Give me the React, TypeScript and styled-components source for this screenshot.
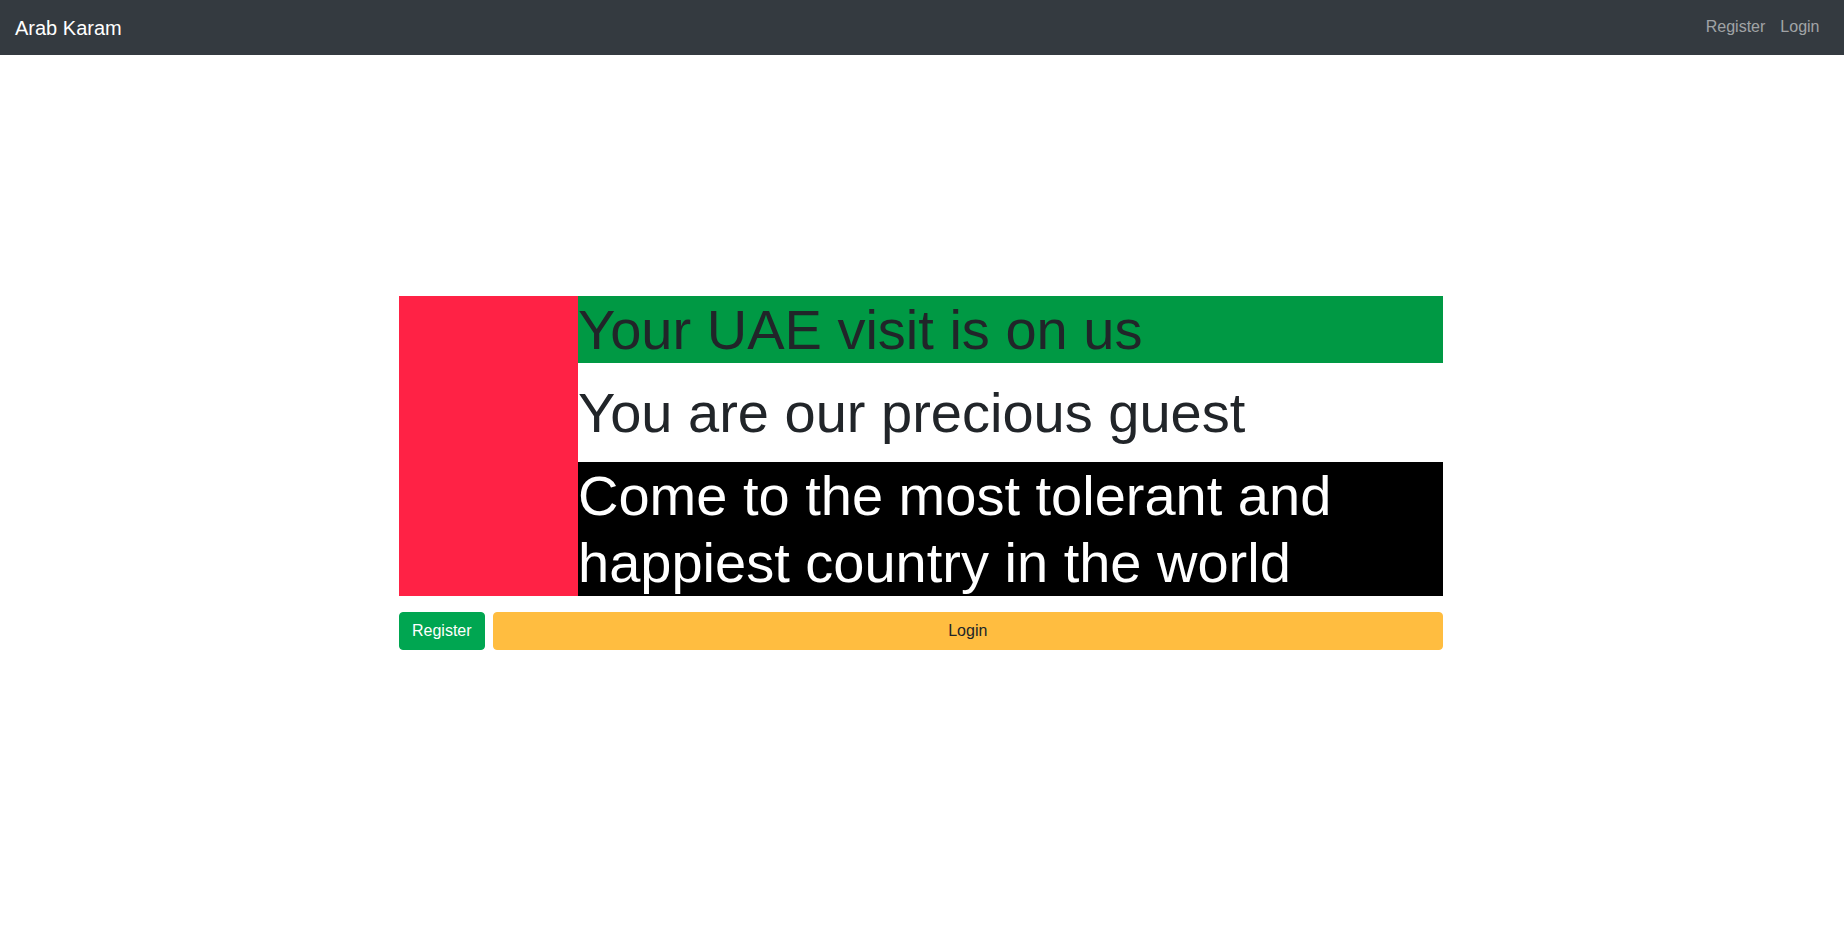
import React from "react";
import styled, { createGlobalStyle } from "styled-components";

const GlobalStyle = createGlobalStyle`
  *, *::before, *::after { box-sizing: border-box; }
  html, body { margin: 0; padding: 0; }
  body {
    font-family: "Liberation Sans", Arial, Helvetica, sans-serif;
    font-size: 16px;
    line-height: 1.5;
    color: #212529;
    background: #ffffff;
  }
`;

const NavBar = styled.nav`
  height: 55px;
  background: #343a40;
  display: flex;
  align-items: center;
  justify-content: space-between;
  padding: 0 17px 0 12px;
`;

const Brand = styled.a`
  font-size: 20px;
  line-height: 30px;
  color: #ffffff;
  text-decoration: none;
  padding: 0 3px;
`;

const NavLinks = styled.div`
  display: flex;
  align-items: center;
`;

const NavLink = styled.a`
  font-size: 16px;
  line-height: 24px;
  color: rgba(255, 255, 255, 0.55);
  padding: 0 7.5px;
  text-decoration: none;
  margin-top: -2px;
`;

const Main = styled.main`
  height: calc(100vh - 55px);
  padding: 0 2px 55px 0;
  display: flex;
  align-items: center;
  justify-content: center;
`;

const Hero = styled.section`
  width: 1044px;
  display: flex;
  flex-direction: column;
  gap: 16px;
`;

const FlagRow = styled.div`
  display: grid;
  grid-template-columns: 179px 1fr;
`;

const RedBar = styled.div`
  background: #ff2245;
`;

const Stripes = styled.div`
  display: flex;
  flex-direction: column;
`;

const toneStyles: Record<string, { bg: string; fg: string; margin: string }> = {
  green: { bg: "#009944", fg: "#212529", margin: "0" },
  white: { bg: "#ffffff", fg: "#212529", margin: "16px 0" },
  black: { bg: "#000000", fg: "#ffffff", margin: "0" },
};

const Stripe = styled.h1<{ $tone: "green" | "white" | "black" }>`
  margin: ${(p) => toneStyles[p.$tone].margin};
  font-size: 56px;
  font-weight: 400;
  line-height: 1.2;
  background: ${(p) => toneStyles[p.$tone].bg};
  color: ${(p) => toneStyles[p.$tone].fg};
`;

const Actions = styled.div`
  display: grid;
  grid-template-columns: auto 1fr;
  gap: 8px;
`;

const Button = styled.button<{ $variant: "green" | "yellow" }>`
  font-family: inherit;
  font-size: 16px;
  line-height: 24px;
  padding: 6px 12px;
  border: 1px solid transparent;
  border-radius: 4px;
  cursor: pointer;
  background: ${(p) => (p.$variant === "green" ? "#00a651" : "#ffbd40")};
  border-color: ${(p) => (p.$variant === "green" ? "#00a651" : "#ffbd40")};
  color: ${(p) => (p.$variant === "green" ? "#ffffff" : "#212529")};
`;

export default function App() {
  return (
    <>
      <GlobalStyle />
      <NavBar>
        <Brand href="#">Arab Karam</Brand>
        <NavLinks>
          <NavLink href="#">Register</NavLink>
          <NavLink href="#">Login</NavLink>
        </NavLinks>
      </NavBar>
      <Main>
        <Hero>
          <FlagRow>
            <RedBar />
            <Stripes>
              <Stripe $tone="green">Your UAE visit is on us</Stripe>
              <Stripe $tone="white">You are our precious guest</Stripe>
              <Stripe $tone="black">
                Come to the most tolerant and happiest country in the world
              </Stripe>
            </Stripes>
          </FlagRow>
          <Actions>
            <Button $variant="green">Register</Button>
            <Button $variant="yellow">Login</Button>
          </Actions>
        </Hero>
      </Main>
    </>
  );
}
